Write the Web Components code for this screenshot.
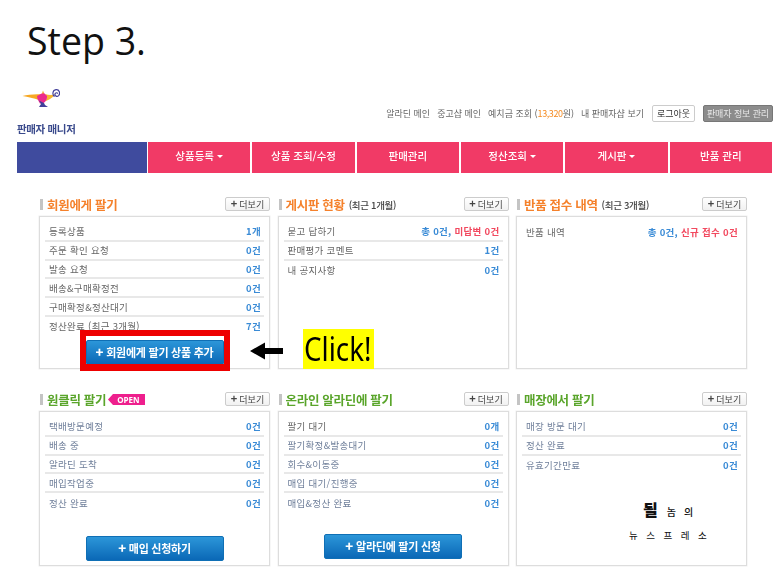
<!DOCTYPE html>
<html lang="ko"><head><meta charset="utf-8"><title>Step 3</title>
<style>
html,body{margin:0;padding:0;background:#fff}
body{width:773px;height:573px;overflow:hidden;font-family:"Noto Sans CJK KR","Noto Sans",sans-serif}
</style></head><body>
<x-app></x-app>
<script>
const KR='"Noto Sans CJK KR","Noto Sans",sans-serif';
function def(name,css,render){
  customElements.define(name,class extends HTMLElement{
    connectedCallback(){
      if(this.shadowRoot)return;
      const s=this.attachShadow({mode:'open'});
      s.innerHTML='<style>'+css+'</style>'+render(this);
    }
  });
}
def('x-more',`:host{display:block;margin-left:auto;flex:none}
.b{box-sizing:border-box;width:45px;height:14px;border:1px solid #ccc;border-radius:2px;background:linear-gradient(#fff,#f1f1f1);font:9px/12px ${KR};color:#444;text-align:center;white-space:nowrap}
b{font-size:11px;font-weight:700;line-height:10px;margin-right:2px}`,
()=>'<div class="b"><b>+</b>더보기</div>');

def('x-row',`:host{box-sizing:border-box;display:flex;justify-content:space-between;align-items:center;height:18.8px;border-bottom:2px solid #e8e8e8;padding:0 3px 0 4px;font:9.5px/16px ${KR};letter-spacing:.3px;color:#666;white-space:nowrap}
:host(:last-of-type){border-bottom:0}
.v{font-weight:700;color:#3a8bd6}
.v i{font-style:normal;color:#f2495f}`,
e=>`<span style="color:${e.getAttribute('c')||'#666'}"><slot></slot></span><span class="v">${e.getAttribute('v')}</span>`);

def('x-btn',`:host{display:block;width:138px;margin:0 auto}
.b{box-sizing:border-box;height:25px;border:1px solid #0f6fb5;border-radius:2px;background:linear-gradient(#2c96d9,#0a68b6);color:#fff;font:700 11px/22px ${KR};letter-spacing:-.25px;text-align:center;white-space:nowrap}
b{font-size:13px;margin-right:3px}`,
e=>`<div class="b"><b>+</b><slot></slot></div>`);

def('x-panel',`:host{display:flex;flex-direction:column;flex:none;width:231px}
.h{display:flex;align-items:center;height:14px;margin-bottom:5px;margin-top:-2px;white-space:nowrap}
.bar{width:3px;height:11px;background:#c4c4c4;margin:1px 4px 0 1px;flex:none}
.t{font:700 12.5px/14px ${KR};letter-spacing:-.3px;color:var(--c);padding-top:1px}
.s{font:500 9.5px/14px ${KR};letter-spacing:-.3px;color:#444;margin-left:4px;padding-top:1px}
.tag{display:flex;align-items:center;margin-left:2px}
.tag svg{display:block}
.tag span{background:#ee1f8d;color:#fff;font:700 8px/11px "Open Sans",sans-serif;padding:0 5px 0 4px;height:11px}
.box{box-sizing:border-box;height:var(--h);border:1px solid #ddd;box-shadow:0 0 0 .5px #eee;padding:6px 5px 0;display:flex;flex-direction:column;position:relative}
.sp{flex:1}
.foot{padding-bottom:var(--fb,3px)}`,
e=>{
  const tag=e.hasAttribute('open')?`<div class="tag"><svg width="5" height="11"><path d="M5 0V11L0 5.5Z" fill="#ee1f8d"/></svg><span>OPEN</span></div>`:'';
  const sub=e.getAttribute('sub')?`<span class="s">${e.getAttribute('sub')}</span>`:'';
  return `<div class="h"><span class="bar"></span><span class="t">${e.getAttribute('t')}</span>${sub}${tag}<x-more></x-more></div>
  <div class="box"><slot></slot><div class="sp"></div><div class="foot"><slot name="foot"></slot></div></div>`;
});

def('x-top',`:host{display:block;box-sizing:border-box;height:70px;position:relative}
.brand{position:absolute;left:17px;top:16px}
.brand svg{display:block;margin-left:5px}
.brand div{font:700 10.5px/13px ${KR};color:#3a4a8c;letter-spacing:-.35px;margin-top:15px;white-space:nowrap}
.links{position:absolute;right:0;top:33px;display:flex;align-items:center;font:9px/14px ${KR};color:#666;white-space:nowrap}
.links span{margin-right:7px}
.links em{font-style:normal;color:#f58a1f;letter-spacing:-.4px}
.lo{box-sizing:border-box;width:43px;height:17px;border:1px solid #ccc;border-radius:2px;background:#fff;color:#333;text-align:center;line-height:15px;margin:0 8px 0 1px}
.mg{box-sizing:border-box;width:70px;height:17px;border:1px solid #777;border-radius:2px;background:#8c8c8c;color:#e8e8e8;text-align:center;line-height:15px;letter-spacing:-.1px}`,
()=>`<div class="brand"><svg width="38" height="19" viewBox="0 0 38 19">
<path d="M.5 8C6 6.6 14 5.8 20 6.5L17 12C12 10 6 9 .5 8Z" fill="#f7a823"/>
<path d="M23 6C26 7 30 7.5 33 6.3C32 9 27 12 23 13.5C25 11 25 8 23 6Z" fill="#f7b731"/>
<path d="M15 8L21.5 4.6L25 8C25.2 12 23 14 21 15.5L18 15.5C16 12.5 15 10 15 8Z" fill="#ec2a8e"/>
<path d="M17 12.5L22 15L23 17L26 19H17L19 16Z" fill="#43409a"/>
<path d="M21 2.4L22 5.4H20Z" fill="#f7a823"/>
<path d="M32.6 8.6C30 7 30.4 2.2 34 1.7C37.4 1.3 38.6 5.4 36.6 7.6C35 9.2 32.6 8 33 6C33.4 4.4 35.6 4.4 35.6 5.8" fill="none" stroke="#43409a" stroke-width="1.2"/></svg><div>판매자 매니저</div></div>
<div class="links"><span>알라딘 메인</span><span>중고샵 메인</span><span>예치금 조회 (<em>13,320</em>원)</span><span>내 판매자샵 보기</span><div class="lo">로그아웃</div><div class="mg">판매자 정보 관리</div></div>`);

def('x-nav',`:host{display:flex;height:31px;margin-left:17px;width:755px;gap:2px;background:#fff}
.blue{width:130px;background:#3f4b9e;flex:none;margin-right:-1px}
.i{flex:1;background:#f13a66;color:#fff;font:500 10.5px/28px ${KR};text-align:center;white-space:nowrap}
.i:after{content:"";display:none}
.c:after{display:inline-block;border:3px solid transparent;border-top:3.5px solid #fff;border-bottom:0;margin-left:3px;vertical-align:2px}`,
()=>`<div class="blue"></div><div class="i c">상품등록</div><div class="i">상품 조회/수정</div><div class="i">판매관리</div><div class="i c">정산조회</div><div class="i c">게시판</div><div class="i">반품 관리</div>`);

def('x-app',`:host{display:block;position:relative;width:773px;height:573px;background:#fff;overflow:hidden}
h1{margin:0;height:72px;padding:16px 0 0 27px;box-sizing:border-box;font:400 37.5px/50px "Open Sans",sans-serif;color:#111}
.page{filter:blur(.3px)}
.grid{display:grid;grid-template-columns:231px 231px 231px;column-gap:7.5px;margin:26px 0 0 39px;row-gap:25px}
.r1{--h:153px}.r2{--h:155px}
.mark{position:absolute;z-index:3}
.red{left:80px;top:330px;width:150px;height:41px;box-sizing:border-box;border:solid #ee0000;border-width:6px 6px 7px}
.arrow{left:250px;top:342px}
.arrow svg{display:block}
.click{left:303px;top:329px;width:71px;height:40px;background:#ffff00;color:#000;font:400 33px/40px "Noto Sans",sans-serif;white-space:nowrap}
.click span{display:inline-block;transform:scaleX(.84);transform-origin:0 50%;margin-left:1px}
.wm{left:629px;top:500px;width:90px;color:#111;white-space:nowrap}
.wm .a{font:500 10px/18px ${KR};letter-spacing:8px;padding-left:14px;height:18px}
.wm .a b{font-size:16px;font-weight:900;letter-spacing:9px}
.wm .b{font:400 9.5px/13px ${KR};letter-spacing:8.5px;margin-top:11px}`,
()=>`<h1>Step 3.</h1>
<div class="page"><x-top></x-top><x-nav></x-nav>
<div class="grid">
<x-panel class="r1" style="--c:#f5812b" t="회원에게 팔기">
<x-row v="1개">등록상품</x-row><x-row v="0건">주문 확인 요청</x-row><x-row v="0건">발송 요청</x-row><x-row v="0건">배송&amp;구매확정전</x-row><x-row v="0건">구매확정&amp;정산대기</x-row><x-row v="7건">정산완료 (최근 3개월)</x-row>
<x-btn slot="foot">회원에게 팔기 상품 추가</x-btn></x-panel>
<x-panel class="r1" style="--c:#f5812b" t="게시판 현황" sub="(최근 1개월)">
<x-row v="총 0건, <i>미답변 0건</i>">묻고 답하기</x-row><x-row v="1건">판매평가 코멘트</x-row><x-row v="0건">내 공지사항</x-row></x-panel>
<x-panel class="r1" style="--c:#f5812b" t="반품 접수 내역" sub="(최근 3개월)">
<x-row v="총 0건, <i>신규 접수 0건</i>">반품 내역</x-row></x-panel>
<x-panel class="r2" style="--c:#5aa52b;--fb:4px" t="원클릭 팔기" open>
<x-row c="#6f7f9a" v="0건">택배방문예정</x-row><x-row c="#6f7f9a" v="0건">배송 중</x-row><x-row c="#6f7f9a" v="0건">알라딘 도착</x-row><x-row c="#6f7f9a" v="0건">매입작업중</x-row><x-row c="#6f7f9a" v="0건">정산 완료</x-row>
<x-btn slot="foot">매입 신청하기</x-btn></x-panel>
<x-panel class="r2" style="--c:#5aa52b;--fb:6px" t="온라인 알라딘에 팔기">
<x-row v="0개">팔기 대기</x-row><x-row c="#6f7f9a" v="0건">팔기확정&amp;발송대기</x-row><x-row c="#6f7f9a" v="0건">회수&amp;이동중</x-row><x-row c="#6f7f9a" v="0건">매입 대기/진행중</x-row><x-row c="#6f7f9a" v="0건">매입&amp;정산 완료</x-row>
<x-btn slot="foot">알라딘에 팔기 신청</x-btn></x-panel>
<x-panel class="r2" style="--c:#5aa52b" t="매장에서 팔기">
<x-row c="#6f7f9a" v="0건">매장 방문 대기</x-row><x-row c="#6f7f9a" v="0건">정산 완료</x-row><x-row c="#6f7f9a" v="0건">유효기간만료</x-row></x-panel>
</div></div>
<div class="mark red"></div>
<div class="mark arrow"><svg width="34" height="18" viewBox="0 0 34 18"><path d="M0 9L15 .5V6H33V12H15V17.5Z" fill="#000"/></svg></div>
<div class="mark click"><span>Click!</span></div>
<div class="mark wm"><div class="a"><b>될</b>놈의</div><div class="b">뉴스프레소</div></div>`);
</script>
</body></html>
